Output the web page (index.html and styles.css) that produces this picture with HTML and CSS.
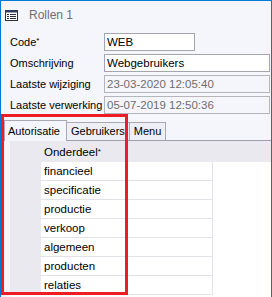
FILE: index.html
```html
<!DOCTYPE html>
<html lang="nl">
<head>
    <meta charset="UTF-8">
    <title>Rollen 1</title>
    <link rel="stylesheet" href="styles.css">
</head>
<body>
    <div class="window">
        <div class="titlebar">
            <svg class="title-icon" width="13" height="11" viewBox="0 0 13 11">
                <rect x="0.5" y="0.5" width="12" height="10" fill="#fff" stroke="#2f2f3a"/>
                <rect x="0" y="0" width="13" height="2.5" fill="#2f3b5c"/>
                <rect x="2" y="4" width="2" height="1" fill="#2f2f3a"/>
                <rect x="5" y="4" width="6" height="1" fill="#2f2f3a"/>
                <rect x="2" y="6" width="2" height="1" fill="#2f2f3a"/>
                <rect x="5" y="6" width="6" height="1" fill="#2f2f3a"/>
                <rect x="2" y="8" width="2" height="1" fill="#2f2f3a"/>
                <rect x="5" y="8" width="6" height="1" fill="#2f2f3a"/>
            </svg>
            <span class="title">Rollen 1</span>
        </div>

        <div class="form">
            <div class="row">
                <label>Code<sup>*</sup></label>
                <div class="field short">WEB</div>
            </div>
            <div class="row">
                <label>Omschrijving</label>
                <div class="field">Webgebruikers</div>
            </div>
            <div class="row">
                <label>Laatste wijziging</label>
                <div class="field disabled">23-03-2020 12:05:40</div>
            </div>
            <div class="row">
                <label>Laatste verwerking</label>
                <div class="field disabled">05-07-2019 12:50:36</div>
            </div>
        </div>

        <div class="tabs">
            <div class="tab active">Autorisatie</div>
            <div class="tab">Gebruikers</div>
            <div class="tab">Menu</div>
        </div>

        <div class="panel">
            <div class="grid">
                <div class="grid-head">
                    <div class="rowhead"></div>
                    <div class="cell">Onderdeel<sup>*</sup></div>
                </div>
                <div class="grid-row"><div class="rowhead"></div><div class="cell">financieel</div></div>
                <div class="grid-row"><div class="rowhead"></div><div class="cell">specificatie</div></div>
                <div class="grid-row"><div class="rowhead"></div><div class="cell">productie</div></div>
                <div class="grid-row"><div class="rowhead"></div><div class="cell">verkoop</div></div>
                <div class="grid-row"><div class="rowhead"></div><div class="cell">algemeen</div></div>
                <div class="grid-row"><div class="rowhead"></div><div class="cell">producten</div></div>
                <div class="grid-row"><div class="rowhead"></div><div class="cell">relaties</div></div>
            </div>
        </div>

        <div class="highlight"></div>
    </div>
</body>
</html>
```

FILE: styles.css
```css
body {
    margin: 0;
    font-family: "Liberation Sans", Arial, sans-serif;
    font-size: 11px;
    color: #000;
}

.window {
    position: relative;
    width: 272px;
    height: 297px;
    box-sizing: border-box;
    border: 1px solid #0078d7;
    border-bottom: none;
    background-color: #f5f6fc;
    overflow: hidden;
}

.titlebar {
    display: flex;
    align-items: center;
    height: 28px;
    padding-left: 4px;
}

.title-icon {
    display: block;
}

.title {
    margin-left: 11px;
    color: #6d6d78;
    font-size: 12px;
}

.form {
    display: flex;
    flex-direction: column;
    gap: 3px;
    padding: 4px 0 0 9px;
}

.row {
    display: flex;
    align-items: center;
    height: 18px;
}

.row label {
    width: 94px;
}

sup {
    font-size: 8px;
    vertical-align: 3px;
    line-height: 0;
}

.field {
    box-sizing: border-box;
    width: 166px;
    height: 18px;
    line-height: 16px;
    padding-left: 2px;
    border: 1px solid #a5a5b0;
    background-color: #fff;
    font-size: 11.5px;
}

.field.short {
    width: 91px;
}

.field.disabled {
    background-color: #f5f6fc;
    color: #6d6d6d;
    border-color: #b4b4bc;
}

.tabs {
    display: flex;
    align-items: flex-end;
    height: 22px;
    margin-top: 4px;
    padding-left: 3px;
    border-bottom: 1px solid #a0a0ac;
}

.tab {
    box-sizing: border-box;
    height: 18px;
    line-height: 16px;
    padding: 0 4px;
    border: 1px solid #a8a8b4;
    border-bottom: none;
    border-left: none;
    background-color: #eeeff4;
}

.tab.active {
    height: 21px;
    line-height: 20px;
    margin-bottom: -1px;
    padding: 0 5px 0 3px;
    border-left: 1px solid #a8a8b4;
    background-color: #f5f6fc;
    width: 63px;
}

.panel {
    padding-left: 9px;
}

.grid {
    background-color: #fff;
    height: 160px;
}

.grid-head {
    display: flex;
    height: 21px;
    background-color: #e9e9ef;
}

.grid-head .cell {
    background-color: #e9e9ef;
    border: none;
}

.grid-row {
    display: flex;
    height: 19px;
}

.rowhead {
    width: 31px;
    background-color: #e9e9ef;
}

.cell {
    box-sizing: border-box;
    width: 172px;
    padding-left: 3px;
    display: flex;
    align-items: center;
    border-right: 1px solid #e2e2e8;
    border-bottom: 1px solid #e2e2e8;
    font-size: 11.5px;
}

.highlight {
    position: absolute;
    left: 0;
    top: 113px;
    width: 127px;
    height: 181px;
    box-sizing: border-box;
    border: 3px solid #ee1c25;
}
```
